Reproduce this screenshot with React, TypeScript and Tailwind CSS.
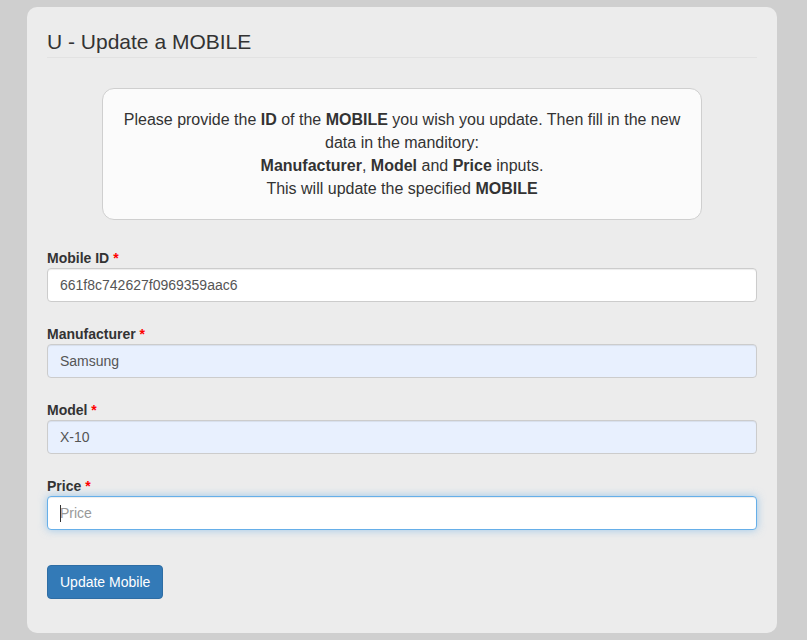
import React from "react";

function Field({
  label,
  value,
  placeholder,
  variant,
}: {
  label: string;
  value?: string;
  placeholder?: string;
  variant: "plain" | "autofill" | "focus";
}) {
  const base =
    "block w-full h-[34px] px-3 text-[14px] text-[#555] rounded-[4px] border outline-none placeholder:text-[#999]";
  const cls =
    variant === "autofill"
      ? "bg-[#e8f0fe] border-[#ccc] shadow-[inset_0_1px_1px_rgba(0,0,0,0.075)]"
      : variant === "focus"
      ? "bg-white border-[#66afe9] shadow-[inset_0_1px_1px_rgba(0,0,0,0.075),0_0_8px_rgba(102,175,233,0.6)]"
      : "bg-white border-[#ccc] shadow-[inset_0_1px_1px_rgba(0,0,0,0.075)]";
  return (
    <div className="mb-[22px]">
      <label className="block text-[14px] leading-[20px] font-bold text-[#333]">
        {label} <span className="text-[#f00] font-bold">*</span>
      </label>
      <div className="relative">
        <input
          className={`${base} ${cls}`}
          defaultValue={value}
          placeholder={placeholder}
          readOnly
          style={{ fontFamily: '"Liberation Sans", Arial, sans-serif' }}
        />
        {variant === "focus" && (
          <span className="absolute left-[13px] top-[9px] w-px h-[17px] bg-[#333]" />
        )}
      </div>
    </div>
  );
}

export default function App() {
  return (
    <div
      className="min-h-[640px] bg-[#cfcfcf] pt-[7px] pl-[27px] pb-[8px]"
      style={{ fontFamily: '"Liberation Sans", Arial, sans-serif' }}
    >
      <div className="w-[750px] h-[626px] bg-[#ececec] rounded-[10px] px-5 pt-[22px]">
        <h3 className="text-[21px] leading-[24px] pt-px h-[29px] text-[#333] border-b border-[#e2e2e2]">
          U - Update a MOBILE
        </h3>
        <div className="mt-[30px] mx-auto w-[600px] bg-[#fbfbfb] border border-[#cfcfcf] rounded-[12px] px-5 py-[19px] text-center text-[16px] leading-[23px] text-[#333]">
          Please provide the <b>ID</b> of the <b>MOBILE</b> you wish you update. Then fill in the new
          data in the manditory:
          <br />
          <b>Manufacturer</b>, <b>Model</b> and <b>Price</b> inputs.
          <br />
          This will update the specified <b>MOBILE</b>
        </div>
        <div className="mt-[28px]">
          <Field label="Mobile ID" value="661f8c742627f0969359aac6" variant="plain" />
          <Field label="Manufacturer" value="Samsung" variant="autofill" />
          <Field label="Model" value="X-10" variant="autofill" />
          <Field label="Price" placeholder="Price" variant="focus" />
        </div>
        <button className="mt-[13px] h-[34px] px-3 bg-[#337ab7] border border-[#2e6da4] rounded-[4px] text-white text-[14px]">
          Update Mobile
        </button>
      </div>
    </div>
  );
}
